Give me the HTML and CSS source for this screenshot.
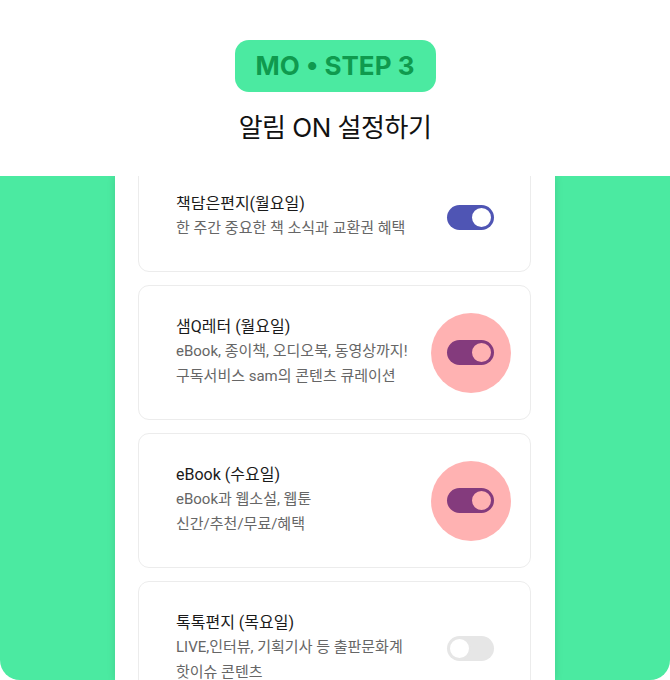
FILE: index.html
```html
<!DOCTYPE html>
<html>
<head>
	<meta charset="utf-8">
	<title>알림 ON 설정하기</title>
	<link rel="stylesheet" href="styles.css">
</head>
<body>

<div class="header">
	<div class="step-badge">MO • STEP 3</div>
	<h1 class="step-title">알림 ON 설정하기</h1>
</div>

<div class="stage">
	<div class="phone">
		<div class="card card-first">
			<div class="card-text">
				<p class="card-title">책담은편지(월요일)</p>
				<p class="card-desc">한 주간 중요한 책 소식과 교환권 혜택</p>
			</div>
			<div class="toggle toggle-on"><span class="knob"></span></div>
		</div>
		<div class="card">
			<div class="card-text">
				<p class="card-title">샘Q레터 (월요일)</p>
				<p class="card-desc">eBook, 종이책, 오디오북, 동영상까지!</p>
				<p class="card-desc">구독서비스 sam의 콘텐츠 큐레이션</p>
			</div>
			<div class="toggle toggle-on"><span class="knob"></span><span class="ripple"></span></div>
		</div>
		<div class="card">
			<div class="card-text">
				<p class="card-title">eBook (수요일)</p>
				<p class="card-desc">eBook과 웹소설, 웹툰</p>
				<p class="card-desc">신간/추천/무료/혜택</p>
			</div>
			<div class="toggle toggle-on"><span class="knob"></span><span class="ripple"></span></div>
		</div>
		<div class="card">
			<div class="card-text">
				<p class="card-title">톡톡편지 (목요일)</p>
				<p class="card-desc">LIVE,인터뷰, 기획기사 등 출판문화계</p>
				<p class="card-desc">핫이슈 콘텐츠</p>
			</div>
			<div class="toggle"><span class="knob"></span></div>
		</div>
	</div>
</div>

</body>
</html>
```

FILE: styles.css
```css
* {
	box-sizing: border-box;
}

body {
	margin: 0;
	background: #fff;
	font-family: Roboto, "Noto Sans CJK KR", sans-serif;
	color: #111;
}

.header {
	height: 176px;
	padding-top: 40px;
	display: flex;
	flex-direction: column;
	align-items: center;
}

.step-badge {
	width: 201px;
	height: 52px;
	border-radius: 14px;
	background: #4beaa1;
	color: #0f9a4e;
	font-family: Inter, "Noto Sans CJK KR", sans-serif;
	font-weight: 700;
	font-size: 26px;
	letter-spacing: 0;
	padding-bottom: 2px;
	display: flex;
	align-items: center;
	justify-content: center;
}

.step-title {
	margin: 17px 0 0;
	font-family: Inter, "Noto Sans CJK KR", sans-serif;
	font-weight: 400;
	font-size: 26px;
	line-height: 38px;
	letter-spacing: -0.5px;
	color: #111;
}

.stage {
	height: 504px;
	background: #4beaa1;
	border-radius: 0 0 20px 20px;
	overflow: hidden;
	display: flex;
	justify-content: center;
}

.phone {
	width: 440px;
	background: #fff;
	padding: 0 24px 0 23px;
	box-shadow: 0 0 8px rgba(0, 0, 0, 0.12);
	display: flex;
	flex-direction: column;
	gap: 13px;
}

.card {
	border: 1px solid #ececec;
	border-radius: 11px;
	padding: 28px 36px 30px 37px;
	display: flex;
	align-items: center;
	justify-content: space-between;
	flex-shrink: 0;
}

.card-first {
	margin-top: -14px;
}

.card-text p {
	margin: 0;
	line-height: 25px;
}

.card-title {
	font-size: 16px;
	font-weight: 400;
	color: #1a1a1a;
}

.card-desc {
	font-size: 15px;
	color: #666;
}

.toggle {
	position: relative;
	width: 47px;
	height: 25px;
	border-radius: 13px;
	background: #e6e6e6;
	margin-top: 2px;
}

.knob {
	position: absolute;
	left: 1px;
	top: 1px;
	width: 23px;
	height: 23px;
	border-radius: 50%;
	background: #fff;
	border: 2px solid #e6e6e6;
}

.toggle-on {
	background: #4f55b4;
}

.toggle-on .knob {
	left: auto;
	right: 1px;
	border-color: #4f55b4;
}

.ripple {
	position: absolute;
	left: 50%;
	top: 50%;
	width: 80px;
	height: 80px;
	margin: -40px 0 0 -40px;
	border-radius: 50%;
	background: rgba(255, 0, 0, 0.3);
}
```
